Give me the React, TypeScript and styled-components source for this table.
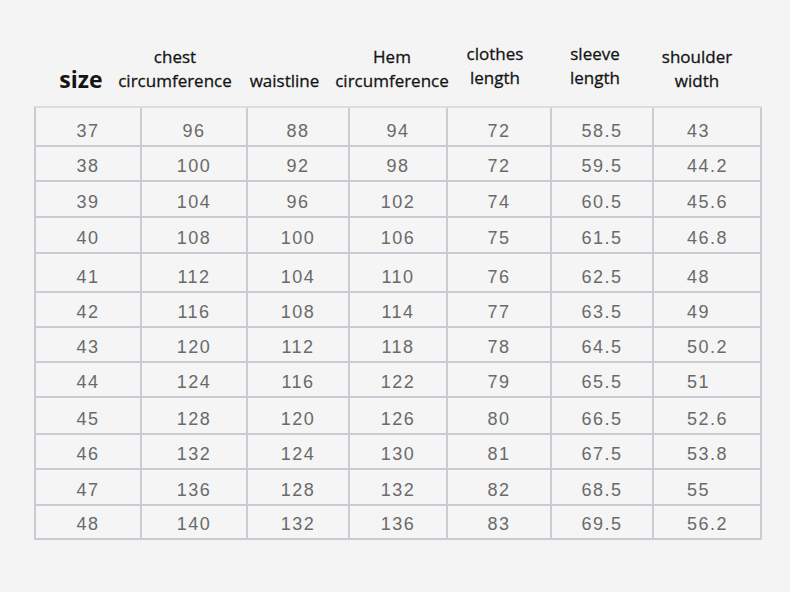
import React from "react";
import styled, { createGlobalStyle } from "styled-components";

const GlobalStyle = createGlobalStyle`
  html, body {
    margin: 0;
    padding: 0;
    background: #f4f4f4;
  }
`;

const HEADERS = [
  { lines: ["size"], width: 94, lift: 2, strong: true },
  { lines: ["chest", "circumference"], width: 94, lift: 0 },
  { lines: ["waistline"], width: 125, lift: 0 },
  { lines: ["Hem", "circumference"], width: 90, lift: 0 },
  { lines: ["clothes", "length"], width: 116, lift: 3 },
  { lines: ["sleeve", "length"], width: 84, lift: 3 },
  { lines: ["shoulder", "width"], width: 120, lift: 0 },
];

const COL_WIDTHS = [106, 106, 102, 98, 104, 102, 108];
const ROW_HEIGHTS = [39, 35, 36, 36, 39, 35, 35, 35, 37, 35, 36, 34];

const ROWS = [
  ["37", "96", "88", "94", "72", "58.5", "43"],
  ["38", "100", "92", "98", "72", "59.5", "44.2"],
  ["39", "104", "96", "102", "74", "60.5", "45.6"],
  ["40", "108", "100", "106", "75", "61.5", "46.8"],
  ["41", "112", "104", "110", "76", "62.5", "48"],
  ["42", "116", "108", "114", "77", "63.5", "49"],
  ["43", "120", "112", "118", "78", "64.5", "50.2"],
  ["44", "124", "116", "122", "79", "65.5", "51"],
  ["45", "128", "120", "126", "80", "66.5", "52.6"],
  ["46", "132", "124", "130", "81", "67.5", "53.8"],
  ["47", "136", "128", "132", "82", "68.5", "55"],
  ["48", "140", "132", "136", "83", "69.5", "56.2"],
];

function App() {
  return (
    <Page>
      <GlobalStyle />
      <HeaderRow $cols={HEADERS.map((h) => h.width)}>
        {HEADERS.map((h, i) => (
          <HeaderCell key={i} $lift={h.lift}>
            {h.lines.map((line) =>
              h.strong ? (
                <SizeLabel key={line}>{line}</SizeLabel>
              ) : (
                <HeaderLine key={line}>{line}</HeaderLine>
              )
            )}
          </HeaderCell>
        ))}
      </HeaderRow>
      <Table $cols={COL_WIDTHS}>
        {ROWS.map((row, r) =>
          row.map((value, c) => (
            <Cell
              key={`${r}-${c}`}
              $height={ROW_HEIGHTS[r]}
              $left={c === row.length - 1}
            >
              {value}
            </Cell>
          ))
        )}
      </Table>
    </Page>
  );
}

export default App;

const Page = styled.div`
  padding: 40px 0 0 34px;
  width: 760px;
  height: 552px;
`;

const HeaderRow = styled.div<{ $cols: number[] }>`
  display: grid;
  grid-template-columns: ${(p) => p.$cols.map((w) => `${w}px`).join(" ")};
  height: 53px;
  align-items: end;
  margin-bottom: 13px;
`;

const HeaderCell = styled.div<{ $lift: number }>`
  display: flex;
  flex-direction: column;
  align-items: center;
  justify-content: flex-end;
  min-width: 0;
  padding-bottom: ${(p) => p.$lift}px;
  font-family: "Open Sans", "DejaVu Sans", sans-serif;
  color: #141414;
`;

const HeaderLine = styled.span`
  font-size: 17px;
  line-height: 24px;
  white-space: nowrap;
  -webkit-text-stroke: 0.3px #141414;
`;

const SizeLabel = styled.span`
  font-size: 23px;
  font-weight: 700;
  line-height: 24px;
  white-space: nowrap;
`;

const Table = styled.div<{ $cols: number[] }>`
  display: grid;
  grid-template-columns: ${(p) => p.$cols.map((w) => `${w}px`).join(" ")};
  border-left: 2px solid #cbcbd3;
  border-top: 2px solid #dcdce2;
  width: max-content;
`;

const Cell = styled.div<{ $height: number; $left?: boolean }>`
  box-sizing: border-box;
  height: ${(p) => p.$height}px;
  display: flex;
  align-items: flex-end;
  justify-content: ${(p) => (p.$left ? "flex-start" : "center")};
  padding: 0 0 4px ${(p) => (p.$left ? "33px" : "0")};
  border-right: 2px solid #cbcbd3;
  border-bottom: 2px solid #cbcbd3;
  background: #f5f5f5;
  font-family: "Liberation Sans", Arial, sans-serif;
  font-size: 18px;
  line-height: 20px;
  letter-spacing: 1.5px;
  color: #6a6a6a;
`;
